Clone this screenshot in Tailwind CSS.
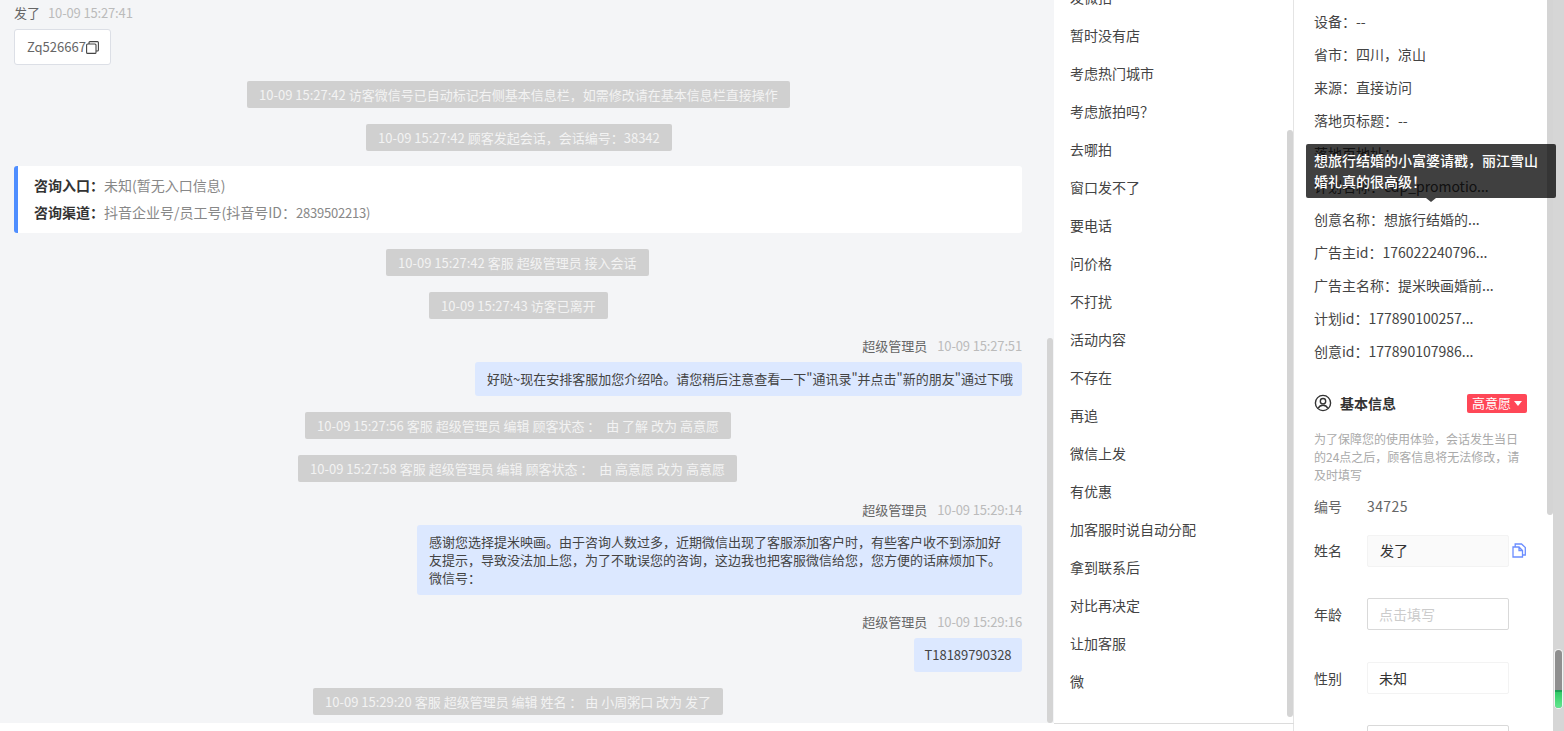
<!DOCTYPE html>
<html lang="zh">
<head>
<meta charset="utf-8">
<script src="https://cdn.jsdelivr.net/npm/@tailwindcss/browser@4"></script>
</head>
<body class="m-0 overflow-hidden bg-white">
<div class="relative flex w-[1564px] h-[731px] overflow-hidden bg-white text-[14px] text-[#444] font-['Noto_Sans_CJK_SC',sans-serif]">

  <!-- Chat column -->
  <main class="relative w-[1054px] h-[723px] shrink-0 bg-[#f4f5f7] overflow-hidden flex flex-col items-stretch pl-[14px] pr-[32px] text-[13px]">
    <div class="h-[26px] flex items-center gap-2 text-[#666]"><span>发了</span><span class="text-[#bbb] tracking-[-0.15px]">10-09 15:27:41</span></div>
    <div class="mt-[3px] self-start h-[36px] w-[97px] flex items-center pl-[12px] bg-white border border-[#dcdfe6] rounded-[3px] text-[#666]">
      <span>Zq526667</span>
      <svg class="w-[13px] h-[13px]" viewBox="0 0 13 13" fill="none" stroke="#444" stroke-width="1.1"><rect x="0.6" y="3" width="9.4" height="9.4" rx="1"/><path d="M3 3V1.6a1 1 0 0 1 1-1h7.4a1 1 0 0 1 1 1V9a1 1 0 0 1-1 1H10"/></svg>
    </div>
    <div class="mt-[16px] self-start ml-[233px] h-[27px] px-[12px] flex items-center bg-[#d0d0d0] rounded-[2px] text-[#f3f3f3] whitespace-nowrap">10-09 15:27:42 访客微信号已自动标记右侧基本信息栏，如需修改请在基本信息栏直接操作</div>
    <div class="mt-[16px] self-start ml-[352px] h-[27px] px-[12px] flex items-center bg-[#d0d0d0] rounded-[2px] text-[#f3f3f3] whitespace-nowrap">10-09 15:27:42 顾客发起会话，会话编号：38342</div>
    <div class="mt-[15px] h-[67px] w-[1008px] bg-white border-l-4 border-[#4f8eff] rounded-[3px] pl-[16px] pb-[2px] flex flex-col justify-center gap-[9px] leading-[18px] text-[14px]">
      <div><span class="font-bold text-[#333]">咨询入口：</span><span class="text-[#888]">未知(暂无入口信息)</span></div>
      <div><span class="font-bold text-[#333]">咨询渠道：</span><span class="text-[#888]">抖音企业号/员工号(抖音号ID：<span class="text-[13px] tracking-[-0.2px]">2839502213)</span></span></div>
    </div>
    <div class="mt-[16px] self-start ml-[372px] h-[27px] px-[12px] flex items-center bg-[#d0d0d0] rounded-[2px] text-[#f3f3f3] whitespace-nowrap">10-09 15:27:42 客服 超级管理员 接入会话</div>
    <div class="mt-[16px] self-start ml-[415px] h-[27px] px-[12px] flex items-center bg-[#d0d0d0] rounded-[2px] text-[#f3f3f3] whitespace-nowrap">10-09 15:27:43 访客已离开</div>
    <div class="mt-[18px] h-[18px] w-[1008px] flex justify-end items-center gap-[10px] text-[#666]"><span>超级管理员</span><span class="text-[#bbb] tracking-[-0.15px]">10-09 15:27:51</span></div>
    <div class="mt-[7px] self-start ml-[461px] w-[547px] h-[34px] px-[12px] flex items-center bg-[#dce8ff] rounded-[3px] whitespace-nowrap">好哒~现在安排客服加您介绍哈。请您稍后注意查看一下"通讯录"并点击"新的朋友"通过下哦</div>
    <div class="mt-[16px] self-start ml-[291px] h-[27px] px-[12px] flex items-center bg-[#d0d0d0] rounded-[2px] text-[#f3f3f3] whitespace-nowrap">10-09 15:27:56 客服 超级管理员 编辑 顾客状态&nbsp;：&nbsp;&nbsp;由 了解 改为 高意愿</div>
    <div class="mt-[16px] self-start ml-[284px] h-[27px] px-[12px] flex items-center bg-[#d0d0d0] rounded-[2px] text-[#f3f3f3] whitespace-nowrap">10-09 15:27:58 客服 超级管理员 编辑 顾客状态&nbsp;：&nbsp;&nbsp;由 高意愿 改为 高意愿</div>
    <div class="mt-[19px] h-[18px] w-[1008px] flex justify-end items-center gap-[10px] text-[#666]"><span>超级管理员</span><span class="text-[#bbb] tracking-[-0.15px]">10-09 15:29:14</span></div>
    <div class="mt-[6px] self-start ml-[403px] w-[605px] h-[70px] px-[12px] py-[8px] bg-[#dce8ff] rounded-[3px] leading-[18px]">感谢您选择提米映画。由于咨询人数过多，近期微信出现了客服添加客户时，有些客户收不到添加好友提示，导致没法加上您，为了不耽误您的咨询，这边我也把客服微信给您，您方便的话麻烦加下。微信号：</div>
    <div class="mt-[18px] h-[18px] w-[1008px] flex justify-end items-center gap-[10px] text-[#666]"><span>超级管理员</span><span class="text-[#bbb] tracking-[-0.15px]">10-09 15:29:16</span></div>
    <div class="mt-[7px] self-start ml-[900px] w-[108px] h-[34px] flex items-center justify-center bg-[#dce8ff] rounded-[3px]">T18189790328</div>
    <div class="mt-[16px] self-start ml-[299px] h-[27px] px-[12px] flex items-center bg-[#d0d0d0] rounded-[2px] text-[#f3f3f3] whitespace-nowrap">10-09 15:29:20 客服 超级管理员 编辑 姓名&nbsp;：&nbsp;由 小周粥口 改为 发了</div>
    <div class="absolute left-[1047px] top-[338px] w-[6px] h-[385px] rounded-[3px] bg-[#d4d4d4]"></div>
  </main>

  <!-- Quick replies -->
  <aside class="relative w-[240px] h-[731px] shrink-0 bg-white overflow-hidden">
    <ul class="-mt-[22px] pl-[16px] flex flex-col">
      <li class="h-[38px] flex items-center">发微拍</li>
      <li class="h-[38px] flex items-center">暂时没有店</li>
      <li class="h-[38px] flex items-center">考虑热门城市</li>
      <li class="h-[38px] flex items-center">考虑旅拍吗？</li>
      <li class="h-[38px] flex items-center">去哪拍</li>
      <li class="h-[38px] flex items-center">窗口发不了</li>
      <li class="h-[38px] flex items-center">要电话</li>
      <li class="h-[38px] flex items-center">问价格</li>
      <li class="h-[38px] flex items-center">不打扰</li>
      <li class="h-[38px] flex items-center">活动内容</li>
      <li class="h-[38px] flex items-center">不存在</li>
      <li class="h-[38px] flex items-center">再追</li>
      <li class="h-[38px] flex items-center">微信上发</li>
      <li class="h-[38px] flex items-center">有优惠</li>
      <li class="h-[38px] flex items-center">加客服时说自动分配</li>
      <li class="h-[38px] flex items-center">拿到联系后</li>
      <li class="h-[38px] flex items-center">对比再决定</li>
      <li class="h-[38px] flex items-center">让加客服</li>
      <li class="h-[38px] flex items-center">微</li>
    </ul>
    <div class="absolute left-[233px] top-[130px] w-[6px] h-[587px] rounded-[3px] bg-[#d4d4d4]"></div>
    <div class="absolute left-[239px] top-0 w-px h-full bg-[#e4e4e4]"></div>
    <div class="absolute left-0 top-[723px] w-full h-px bg-[#dcdcdc]"></div>
  </aside>

  <!-- Customer info -->
  <section class="relative w-[270px] h-[731px] shrink-0 bg-white overflow-hidden pl-[20px]">
    <div class="w-[216px] pt-[5px] flex flex-col">
      <div class="h-[33px] flex items-center">设备：--</div>
      <div class="h-[33px] flex items-center">省市：四川，凉山</div>
      <div class="h-[33px] flex items-center">来源：直接访问</div>
      <div class="h-[33px] flex items-center">落地页标题：--</div>
      <div class="h-[33px] flex items-center">落地页地址：</div>
      <div class="h-[33px] flex items-center">计划名称：cdp_promotio...</div>
      <div class="h-[33px] flex items-center">创意名称：想旅行结婚的...</div>
      <div class="h-[33px] flex items-center">广告主id：176022240796...</div>
      <div class="h-[33px] flex items-center">广告主名称：提米映画婚前...</div>
      <div class="h-[33px] flex items-center">计划id：177890100257...</div>
      <div class="h-[33px] flex items-center">创意id：177890107986...</div>
    </div>
    <div class="mt-[25px] w-[213px] h-[20px] flex items-center">
      <svg class="w-[18px] h-[18px] shrink-0" viewBox="0 0 18 18" fill="none" stroke="#333" stroke-width="1.4"><circle cx="9" cy="9" r="7.6"/><circle cx="9" cy="7.2" r="2.7"/><path d="M4.2 14.200c1-2.100 2.700-3 4.800-3s3.800 .9 4.800 3"/></svg>
      <span class="ml-[8px] font-bold text-[#333]">基本信息</span>
      <span class="ml-auto w-[60px] h-[19px] flex items-center justify-center gap-[3px] bg-[#ff4757] rounded-[2px] text-white text-[13px]">高意愿<svg class="w-[8px] h-[5px]" viewBox="0 0 8 5" fill="#fff"><path d="M0 0h8L4 5z"/></svg></span>
    </div>
    <p class="mt-[17px] w-[213px] text-[12px] leading-[18px] text-[#aaa]">为了保障您的使用体验，会话发生当日的24点之后，顾客信息将无法修改，请及时填写</p>
    <div class="mt-[11px] h-[22px] flex items-center text-[#666]"><span class="w-[53px]">编号</span><span class="tracking-[0.4px]">34725</span></div>
    <div class="mt-[18px] h-[32px] flex items-center">
      <span class="w-[53px] pb-[2px]">姓名</span>
      <span class="w-[142px] h-[32px] pl-[12px] pb-[2px] flex items-center bg-[#fafafa] border border-[#f3f3f3] rounded-[2px] text-[#333]">发了</span>
      <svg class="ml-[3px] -mt-[1px] w-[14px] h-[15px]" viewBox="0 0 14 15" fill="none" stroke="#6b8dff" stroke-width="1.300"><path d="M1 4h6l3.500 3.500V14H1zM7 4v3.500h3.500M3.200 3.600V1h6.300l3.800 3.500V12h-2.800"/></svg>
    </div>
    <div class="mt-[31px] h-[32px] flex items-center">
      <span class="w-[53px]">年龄</span>
      <span class="w-[142px] h-[32px] pl-[11px] flex items-center border border-[#d9d9d9] rounded-[2px] text-[#ccc]">点击填写</span>
    </div>
    <div class="mt-[32px] h-[32px] flex items-center">
      <span class="w-[53px]">性别</span>
      <span class="w-[142px] h-[32px] pl-[11px] flex items-center border border-[#f3f3f3] rounded-[2px] text-[#333]">未知</span>
    </div>
    <div class="mt-[31px] ml-[53px] w-[142px] h-[32px] border border-[#d9d9d9] rounded-[2px]"></div>

    <!-- Scrollbars -->
    <div class="absolute left-[253px] top-0 w-[6px] h-[515px] rounded-b-[3px] bg-[#d4d4d4]"></div>
    <div class="absolute left-[259px] top-0 w-[11px] h-full bg-[#d6d6d6]"></div>
    <div class="absolute left-[261px] top-[650px] w-[7px] h-[58px] rounded-[4px] ring-1 ring-white/70 bg-[#8f8f8f] overflow-hidden flex flex-col justify-end"><div class="h-[18px] border-t-2 border-[#1f9d55] bg-gradient-to-b from-[#2ec964] to-[#62e890]"></div></div>

    <!-- Tooltip -->
    <div class="absolute left-[12px] top-[144px] w-[250px] h-[54px] px-[8px] py-[6px] bg-black/75 rounded-[2px] text-white font-medium leading-[21px]">想旅行结婚的小富婆请戳，丽江雪山婚礼真的很高级！</div>
    <div class="absolute left-[132px] top-[198px] w-0 h-0 border-x-[5px] border-x-transparent border-t-[4px] border-t-black/75"></div>
  </section>
</div>
</body>
</html>
